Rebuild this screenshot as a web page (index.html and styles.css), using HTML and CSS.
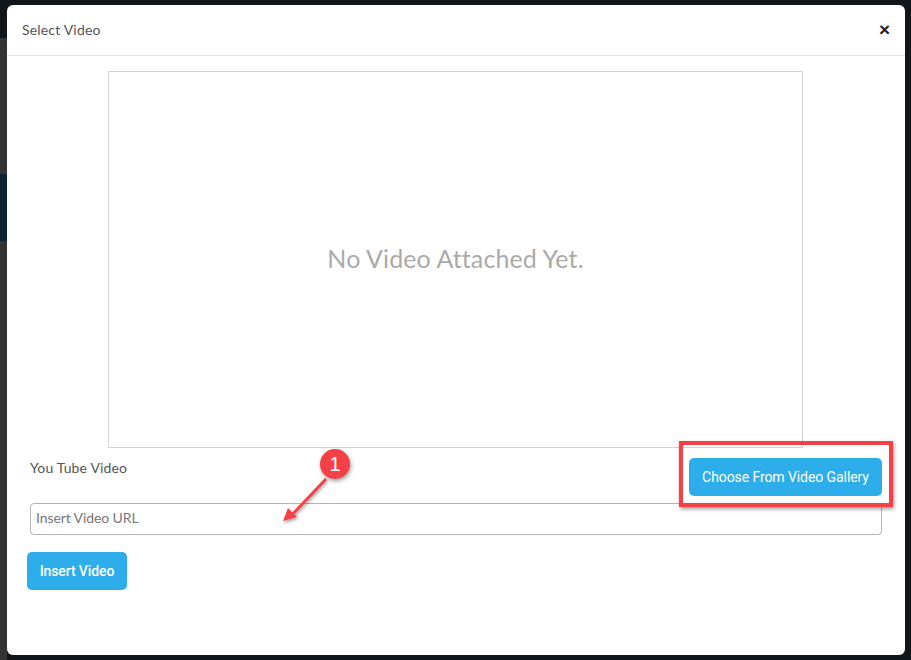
FILE: index.html
```html
<!DOCTYPE html>
<html lang="en">
<head>
    <meta charset="UTF-8">
    <meta name="viewport" content="width=device-width, initial-scale=1.0">
    <title>Select Video</title>
    <link rel="stylesheet" href="styles.css">
</head>
<body>
    <div class="modal">
        <div class="modal-header">
            <span class="modal-title">Select Video</span>
            <span class="modal-close">&times;</span>
        </div>
        <div class="modal-body">
            <div class="video-box">No Video Attached Yet.</div>
            <div class="video-row">
                <label class="video-label">You Tube Video</label>
                <button class="blue-btn gallery-btn">Choose From Video Gallery</button>
            </div>
            <input class="url-input" type="text" placeholder="Insert Video URL">
            <button class="blue-btn insert-btn">Insert Video</button>
        </div>
    </div>

    <!-- annotations on top of the screenshot -->
    <div class="mark-box"></div>
    <svg class="mark-arrow" width="80" height="80" viewBox="0 0 80 80">
        <defs>
            <filter id="markShadow" x="-30%" y="-30%" width="160%" height="160%">
                <feDropShadow dx="1" dy="2" stdDeviation="1.5" flood-color="#000" flood-opacity="0.35"/>
            </filter>
        </defs>
        <g filter="url(#markShadow)">
            <path d="M46 19 L9 58" stroke="#f44046" stroke-width="3" fill="none"/>
            <path d="M3 61 L8 48 L17 57 Z" fill="#f44046"/>
        </g>
    </svg>
    <div class="mark-num">1</div>
</body>
</html>
```

FILE: styles.css
```css
html, body {
    height: 100%;
}
body {
    margin: 0;
    overflow: hidden;
    background-color: #11161a;
    font-family: Lato, "Open Sans", sans-serif;
    color: #555;
}
/* page behind the modal, only a thin strip of it shows on the left */
body::before {
    content: "";
    position: absolute;
    left: 0;
    top: 0;
    bottom: 0;
    width: 7px;
    background: linear-gradient(to bottom,
        #11161a 0, #11161a 38px,
        #333 38px, #333 174px,
        #0d2430 174px, #0d2430 241px,
        #333 241px);
}
.modal {
    position: relative;
    box-sizing: border-box;
    width: 898px;
    height: 650px;
    margin: 5px 0 0 7px;
    background: white;
    border-radius: 6px;
}
.modal-header {
    display: flex;
    justify-content: space-between;
    align-items: center;
    box-sizing: border-box;
    height: 51px;
    padding: 0 15px 2px 15px;
    border-bottom: 1px solid #e5e5e5;
}
.modal-title {
    font-size: 14px;
    letter-spacing: 0.18px;
    color: #555;
}
.modal-close {
    font-family: "Liberation Sans", sans-serif;
    font-size: 19px;
    font-weight: bold;
    line-height: 1;
    color: #222;
}
.modal-body {
    display: flex;
    flex-direction: column;
    padding: 15px 23px 0 20px;
}
.video-box {
    display: flex;
    align-items: center;
    justify-content: center;
    box-sizing: border-box;
    width: 695px;
    height: 377px;
    margin-left: 81px;
    padding-bottom: 4px;
    border: 1px solid #d2d2d2;
    font-size: 25px;
    letter-spacing: 0.1px;
    color: #aaa;
}
.video-row {
    display: flex;
    justify-content: space-between;
    align-items: flex-start;
    margin: 10px 0 7px 3px;
}
.video-label {
    margin-top: 1px;
    font-size: 14px;
    line-height: 17px;
    letter-spacing: 0.15px;
    color: #555;
}
.blue-btn {
    border: none;
    border-radius: 5px;
    background-color: #2dade9;
    color: white;
    font-family: Roboto, Lato, sans-serif;
    font-size: 14px;
    font-weight: 500;
}
.gallery-btn {
    width: 193px;
    height: 38px;
    font-weight: 400;
    letter-spacing: -0.08px;
}
.url-input {
    box-sizing: border-box;
    width: 852px;
    height: 32px;
    margin-left: 3px;
    padding: 0 5px 4px;
    border: 1px solid #b4b4b4;
    border-radius: 4px;
    font-family: Lato, sans-serif;
    font-size: 14px;
    letter-spacing: -0.1px;
    color: #555;
}
.url-input::placeholder {
    color: #777;
}
.insert-btn {
    width: 100px;
    height: 38px;
    margin-top: 17px;
    letter-spacing: -0.1px;
}
.mark-box {
    position: absolute;
    left: 679px;
    top: 441px;
    box-sizing: border-box;
    width: 214px;
    height: 66px;
    border: 4px solid #f44046;
    box-shadow: 1px 2px 4px rgba(0, 0, 0, 0.4);
}
.mark-arrow {
    position: absolute;
    left: 280px;
    top: 460px;
}
.mark-num {
    position: absolute;
    left: 320px;
    top: 449px;
    width: 30px;
    height: 30px;
    border-radius: 50%;
    background-color: #f44046;
    box-shadow: 1px 2px 4px rgba(0, 0, 0, 0.4);
    color: white;
    font-family: "Liberation Sans", sans-serif;
    font-size: 20px;
    line-height: 30px;
    text-align: center;
}
```
